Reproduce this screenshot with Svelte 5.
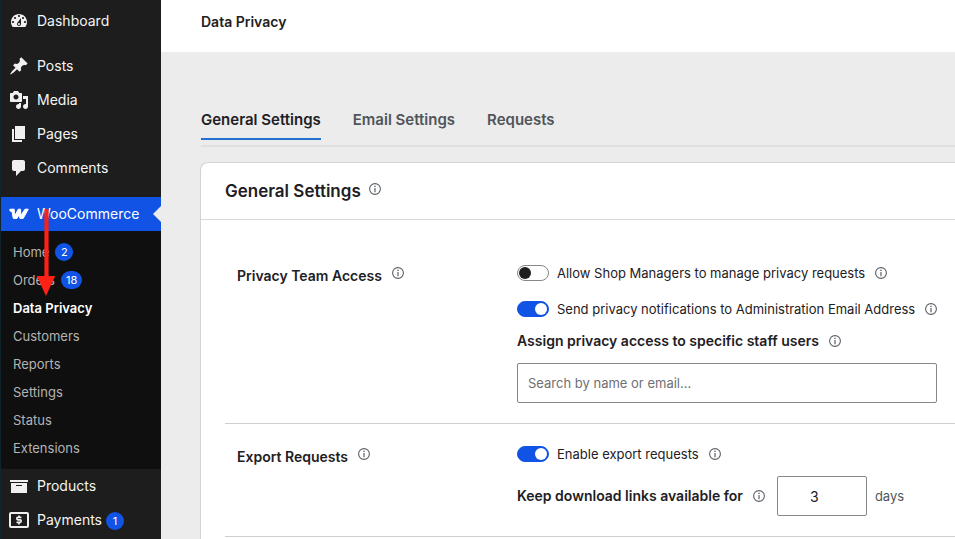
<script>
  const icons = {
    dashboard: 'M3.76 16h12.48c1.1-1.37 1.76-3.11 1.76-5 0-4.42-3.58-8-8-8s-8 3.58-8 8c0 1.89.66 3.63 1.76 5zM10 4c.55 0 1 .45 1 1s-.45 1-1 1-1-.45-1-1 .45-1 1-1zM6 6c.55 0 1 .45 1 1s-.45 1-1 1-1-.45-1-1 .45-1 1-1zm8 0c.55 0 1 .45 1 1s-.45 1-1 1-1-.45-1-1 .45-1 1-1zm-5.37 5.55L12 7v6c0 1.1-.9 2-2 2s-2-.9-2-2c0-.57.24-1.08.63-1.45zM4 10c.55 0 1 .45 1 1s-.45 1-1 1-1-.45-1-1 .45-1 1-1zm12 0c.55 0 1 .45 1 1s-.45 1-1 1-1-.45-1-1 .45-1 1-1zm-5 3c0-.55-.45-1-1-1s-1 .45-1 1 .45 1 1 1 1-.45 1-1z',
    posts: 'M10.44 3.02l1.82-1.82 6.36 6.35-1.83 1.82c-1.05-.68-2.48-.57-3.41.36l-.75.75c-.92.93-1.04 2.35-.35 3.41l-1.83 1.82-2.41-2.41-2.8 2.79c-.42.42-3.38 2.71-3.8 2.29s1.86-3.39 2.28-3.81l2.79-2.79L4.1 9.36l1.83-1.82c1.05.69 2.48.57 3.4-.36l.75-.75c.93-.92 1.05-2.35.36-3.41z',
    media: 'M13 11V4c0-.55-.45-1-1-1h-1.67L9 1H5L3.67 3H2c-.55 0-1 .45-1 1v7c0 .55.45 1 1 1h10c.55 0 1-.45 1-1zM7 4.5c1.38 0 2.5 1.12 2.5 2.5S8.38 9.5 7 9.5 4.5 8.38 4.5 7 5.62 4.5 7 4.5zM14 6h5v10.5c0 1.38-1.12 2.5-2.5 2.5S14 17.88 14 16.5s1.12-2.5 2.5-2.5c.17 0 .34.02.5.05V9h-3V6zm-4 8.05V13h2v3.5c0 1.38-1.12 2.5-2.5 2.5S7 17.88 7 16.5 8.12 14 9.5 14c.17 0 .34.02.5.05z',
    pages: 'M6 15V2h10v13H6zm-1 1h8v2H3V5h2v11z',
    comments: 'M5 2h9c1.1 0 2 .9 2 2v7c0 1.1-.9 2-2 2h-2l-5 5v-5H5c-1.1 0-2-.9-2-2V4c0-1.1.9-2 2-2z',
    products: 'M19 4v2H1V4h18zM2 7h16v10H2V7zm11 3V9H7v1h6z'
  };
  const topItems = [
    { name: 'Posts', icon: icons.posts },
    { name: 'Media', icon: icons.media },
    { name: 'Pages', icon: icons.pages },
    { name: 'Comments', icon: icons.comments }
  ];
  const wooItems = [
    { name: 'Home', count: 2 },
    { name: 'Orders', count: 18 },
    { name: 'Data Privacy', current: true },
    { name: 'Customers' },
    { name: 'Reports' },
    { name: 'Settings' },
    { name: 'Status' },
    { name: 'Extensions' }
  ];
  const tabs = ['General Settings', 'Email Settings', 'Requests'];
  let active = $state('General Settings');
  let allowManagers = $state(false);
  let notifyAdmin = $state(true);
  let enableExport = $state(true);
  let staff = $state('');
  let days = $state(3);
</script>

{#snippet menuItem(name, icon)}
  <a class="item" href="#{name.toLowerCase()}">
    <svg class="glyph" viewBox="0 0 20 20" aria-hidden="true"><path d={icon} /></svg>
    <span>{name}</span>
  </a>
{/snippet}

{#snippet info(about)}
  <button class="info" type="button" aria-label="About {about}">
    <svg viewBox="0 0 12 12" aria-hidden="true">
      <circle cx="6" cy="6" r="5.4" fill="none" stroke="#5c6066" stroke-width="1.1" />
      <path d="M5.3 2.8h1.4v1.3H5.3zM5.4 5h1.2v4.2H5.4z" fill="#5c6066" />
    </svg>
  </button>
{/snippet}

<div class="app">
  <nav class="sidebar" aria-label="Admin menu">
    <div class="group">{@render menuItem('Dashboard', icons.dashboard)}</div>
    <div class="group">
      {#each topItems as item}{@render menuItem(item.name, item.icon)}{/each}
    </div>
    <a class="item selected" href="#woocommerce">
      <svg class="glyph" viewBox="0 0 20 20" aria-hidden="true">
        <path d="M1 5.2h4.2L5.5 12.3 9.3 5.2h2.3l.2 6.6.9-1.6 3.3-5h3.3l-5.1 9.2h-3.3l-.5-4-2.4 4H4.3L3 7.6C1.6 7.6 0 6.4 1 5.2z" fill="#fff" stroke="#fff" stroke-width="1" stroke-linejoin="round" />
      </svg>
      <span>WooCommerce</span>
      <i class="notch"></i>
    </a>
    <ul class="submenu">
      {#each wooItems as item}
        <li>
          <a class:current={item.current} href="#{item.name.toLowerCase().replace(' ', '-')}">
            {item.name}
            {#if item.count}<span class="count">{item.count}</span>{/if}
          </a>
        </li>
      {/each}
    </ul>
    {@render menuItem('Products', icons.products)}
    <a class="item" href="#payments">
      <svg class="glyph" viewBox="0 0 20 20" aria-hidden="true">
        <rect x="1" y="3" width="18" height="14" rx="1" fill="none" stroke="#f0f0f1" stroke-width="2" />
        <path d="M12.4 7.4H8.9c-.7 0-1.1.5-1.1 1.2s.4 1.2 1.1 1.2h2.2c.7 0 1.1.5 1.1 1.3s-.4 1.3-1.1 1.3H7.5M10 5.4v2M10 12.4v2.2" fill="none" stroke="#f0f0f1" stroke-width="1.7" />
      </svg>
      <span>Payments <span class="count">1</span></span>
    </a>
    <svg class="arrow" viewBox="0 0 20 88" aria-hidden="true">
      <path d="M9.4 0h4.2v67h6.6L11 87 1.8 67h7.6z" fill="#fb2116" />
    </svg>
  </nav>

  <div class="main">
    <header><h1>Data Privacy</h1></header>
    <main>
      <div class="tabs" role="tablist">
        {#each tabs as tab}
          <button type="button" role="tab" aria-selected={active === tab} onclick={() => (active = tab)}>{tab}</button>
        {/each}
      </div>

      <section class="card">
        <div class="card-head">
          <h2>General Settings</h2>
          {@render info('general settings')}
        </div>

        <div class="card-body">
          <div class="setting first">
            <div class="title">
              <h3>Privacy Team Access</h3>
              {@render info('privacy team access')}
            </div>
            <div class="fields">
              <div class="line">
                <label><input class="switch" type="checkbox" bind:checked={allowManagers} />Allow Shop Managers to manage privacy requests</label>
                {@render info('shop managers')}
              </div>
              <div class="line spaced">
                <label><input class="switch" type="checkbox" bind:checked={notifyAdmin} />Send privacy notifications to Administration Email Address</label>
                {@render info('privacy notifications')}
              </div>
              <div class="line">
                <label class="strong" for="staff">Assign privacy access to specific staff users</label>
                {@render info('staff access')}
              </div>
              <input id="staff" class="box search" type="text" placeholder="Search by name or email..." bind:value={staff} />
            </div>
          </div>

          <div class="setting">
            <div class="title">
              <h3>Export Requests</h3>
              {@render info('export requests')}
            </div>
            <div class="fields">
              <div class="line">
                <label><input class="switch" type="checkbox" bind:checked={enableExport} />Enable export requests</label>
                {@render info('enabling exports')}
              </div>
              <div class="line">
                <label class="strong" for="days">Keep download links available for</label>
                {@render info('download links')}
                <span class="amount">
                  <input id="days" class="box days" type="number" min="1" bind:value={days} />
                  <span class="unit">days</span>
                </span>
              </div>
            </div>
          </div>
        </div>
      </section>
    </main>
  </div>
</div>

<style>
  :global(body) { margin: 0; background: #ececec; }
  .app {
    display: flex;
    height: 100vh;
    overflow: hidden;
    font: 13px/20px Inter, "Liberation Sans", sans-serif;
    color: #1e2024;
  }
  h1, h2, h3, ul { margin: 0; padding: 0; font-weight: 600; }
  a { color: inherit; text-decoration: none; }
  button, input { font: inherit; color: inherit; margin: 0; }

  .sidebar {
    position: relative;
    box-sizing: border-box;
    flex: 0 0 161px;
    padding-top: 4px;
    border-left: 1px solid #10252b;
    background: #1d1d1d;
    color: #f4f4f4;
  }
  .group { margin-bottom: 11px; }
  .item {
    position: relative;
    display: flex;
    align-items: center;
    gap: 8px;
    height: 34px;
    padding-left: 8px;
    font-size: 14px;
  }
  .glyph { width: 20px; height: 20px; fill: #f0f0f1; }
  .selected { background: #1153e4; color: #fff; margin-top: 12px; }
  .notch {
    position: absolute;
    right: 0;
    top: 9px;
    border: 8px solid transparent;
    border-left: 0;
    border-right-color: #ececec;
  }
  .submenu {
    list-style: none;
    padding: 7px 0;
    background: #0f0f0f;
    font-weight: 400;
  }
  .submenu a {
    display: flex;
    align-items: center;
    gap: 6px;
    height: 28px;
    padding-left: 12px;
    color: #b4b4b4;
  }
  .submenu a.current { color: #fff; font-weight: 600; }
  .count {
    display: inline-block;
    box-sizing: border-box;
    min-width: 18px;
    padding: 0 5px;
    border-radius: 9px;
    background: #1153e4;
    color: #fff;
    font-size: 11px;
    line-height: 18px;
    text-align: center;
  }
  .arrow { position: absolute; left: 34px; top: 209px; width: 20px; height: 88px; }

  .main { flex: 1; min-width: 0; }
  header { padding: 12px 40px 20px; background: #fff; }
  h1 { font-size: 14px; line-height: 20px; }
  main { padding: 55px 0 0 40px; }
  .tabs { display: flex; gap: 32px; border-bottom: 2px solid #e0e0e0; padding-bottom: 5px; }
  .tabs button {
    padding: 3px 0 8px;
    border: 0;
    border-bottom: 2px solid transparent;
    background: none;
    font-size: 15px;
    font-weight: 600;
    color: #50555a;
  }
  .tabs button[aria-selected="true"] { color: #1e2024; border-color: #2271d1; }

  .card {
    margin: 15px 0 0 -1px;
    padding-bottom: 24px;
    border: 1px solid #d2d3d5;
    border-right: 0;
    border-radius: 8px 0 0 0;
    background: #fff;
  }
  .card-head {
    display: flex;
    gap: 8px;
    padding: 16px 24px;
    border-bottom: 1px solid #d8d9db;
  }
  h2 { font-size: 17px; line-height: 24px; }
  .card-head .info { margin-top: 4px; }
  .card-body { padding: 3px 0 0 24px; }
  .setting {
    display: flex;
    padding: 20px 18px 20px 12px;
    border-bottom: 1px solid #cfd0d2;
  }
  .setting.first { padding-top: 40px; }
  .title { display: flex; gap: 10px; flex: 0 0 280px; }
  .title .info { margin-top: 4px; }
  h3 { font-size: 14px; line-height: 26px; }
  .fields { flex: 1; min-width: 0; display: flex; flex-direction: column; gap: 12px; }
  .line { display: flex; align-items: center; gap: 10px; white-space: nowrap; }
  .spaced { margin-top: 4px; }
  .line label { display: flex; align-items: center; gap: 8px; }
  .line .strong { font-size: 14px; font-weight: 600; }
  .info {
    display: flex;
    flex: none;
    width: 12px;
    height: 12px;
    padding: 0;
    border: 0;
    background: none;
  }
  .info svg { width: 12px; height: 12px; }
  .switch {
    appearance: none;
    box-sizing: border-box;
    display: flex;
    flex: none;
    width: 32px;
    height: 16px;
    padding: 1px;
    border: 1px solid #85878a;
    border-radius: 8px;
    background: #fff;
  }
  .switch::before { content: ""; width: 12px; height: 12px; border-radius: 50%; background: #1e1e1e; }
  .switch:checked { justify-content: flex-end; border-color: #1153e4; background: #1153e4; }
  .switch:checked::before { background: #fff; }
  .box {
    box-sizing: border-box;
    height: 40px;
    border: 1px solid #85878a;
    border-radius: 2px;
    background: #fff;
  }
  .search { width: 100%; padding: 0 10px; }
  .search::placeholder { color: #707070; opacity: 1; }
  .amount { display: flex; align-items: center; gap: 8px; padding-left: 2px; }
  .days {
    width: 90px;
    padding: 0 15px 0 0;
    font-size: 14px;
    text-align: center;
    appearance: textfield;
  }
  .days::-webkit-inner-spin-button { appearance: none; }
  .unit { color: #50555a; }
</style>
